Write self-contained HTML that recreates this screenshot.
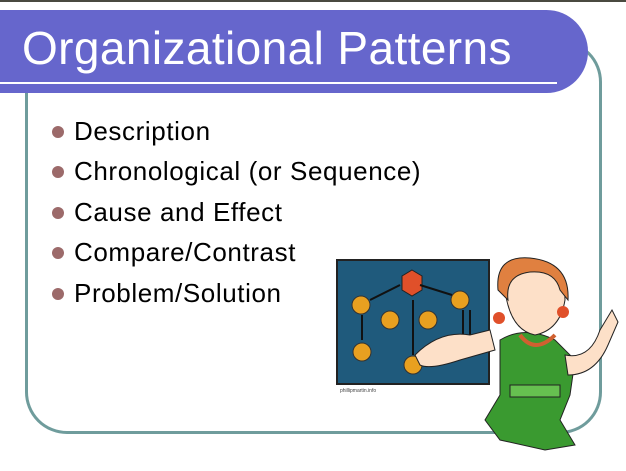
<!DOCTYPE html>
<html><head><style>
body{margin:0;width:626px;height:471px;overflow:hidden;background:#fff;position:relative;font-family:"Liberation Sans",sans-serif}
.top{position:absolute;left:0;top:0;width:626px;height:2px;background:#4a4a40}
.frame{position:absolute;left:25px;top:40px;width:571px;height:388px;border:3px solid #6f9c9c;border-radius:42px}
.bar{position:absolute;left:0;top:10px;width:588px;height:83px;background:#6666cc;border-radius:0 42px 42px 0}
.line{position:absolute;left:0;top:82px;width:557px;height:2px;background:#fff}
.title{position:absolute;left:22px;top:22px;color:#fff;font-size:46px;line-height:52px;letter-spacing:0.4px}
ul{position:absolute;left:52px;top:111px;margin:0;padding:0;list-style:none}
li{font-size:26px;line-height:40.4px;height:40.4px;color:#000;position:relative;padding-left:22px;letter-spacing:0.6px}
li:before{content:"";position:absolute;left:0;top:15px;width:12px;height:12px;border-radius:50%;background:#9c6a6a}
</style></head><body>
<div class="top"></div>
<div class="frame"></div>
<div class="bar"></div>
<div class="line"></div>
<div class="title">Organizational Patterns</div>
<ul><li>Description</li><li>Chronological (or Sequence)</li><li>Cause and Effect</li><li>Compare/Contrast</li><li>Problem/Solution</li></ul>
<svg style="position:absolute;left:0;top:0" width="626" height="471">
<rect x="337" y="260" width="152" height="124" fill="#1f5a7c" stroke="#222" stroke-width="2"/>
<polygon points="412,270 422,276 422,290 412,296 402,290 402,276" fill="#e0502a" stroke="#222"/>
<g fill="#e8a020" stroke="#333">
<circle cx="361" cy="305" r="9"/><circle cx="390" cy="320" r="9"/><circle cx="428" cy="320" r="9"/><circle cx="460" cy="300" r="9"/><circle cx="362" cy="352" r="9"/><circle cx="413" cy="365" r="9"/>
</g>
<g stroke="#111" stroke-width="2" fill="none">
<path d="M370 300L400 285M362 315L362 340M420 285L452 295M413 300L413 355M470 310L470 340M463 310L463 340"/>
</g>
<text x="340" y="392" font-size="5" fill="#444">phillipmartin.info</text>
<path d="M415 355 Q440 330 470 335 L490 330 L495 350 L460 360 Q430 370 420 365Z" fill="#fde0c8" stroke="#222"/>
<path d="M500 340 Q525 325 555 340 L575 360 L570 395 L560 420 L575 445 L545 450 L500 440 L485 420 L500 395Z" fill="#3a9a30" stroke="#222"/>
<rect x="510" y="385" width="50" height="12" fill="#66c050" stroke="#222"/>
<path d="M565 355 Q590 360 600 330 L612 310 L618 322 L608 345 Q595 375 568 375Z" fill="#fde0c8" stroke="#222"/>
<path d="M505 290 Q500 260 530 262 Q565 262 565 300 Q560 330 535 335 Q510 330 505 290Z" fill="#fde0c8" stroke="#222"/>
<path d="M498 290 Q495 255 530 258 Q570 262 568 300 L560 290 Q555 270 530 272 Q505 275 508 300Z" fill="#e08040" stroke="#222"/>
<path d="M520 335 Q535 355 555 335" fill="none" stroke="#d06030" stroke-width="4"/>
<circle cx="499" cy="318" r="6" fill="#e0502a"/><circle cx="563" cy="312" r="6" fill="#e0502a"/>
</svg>
</body></html>
